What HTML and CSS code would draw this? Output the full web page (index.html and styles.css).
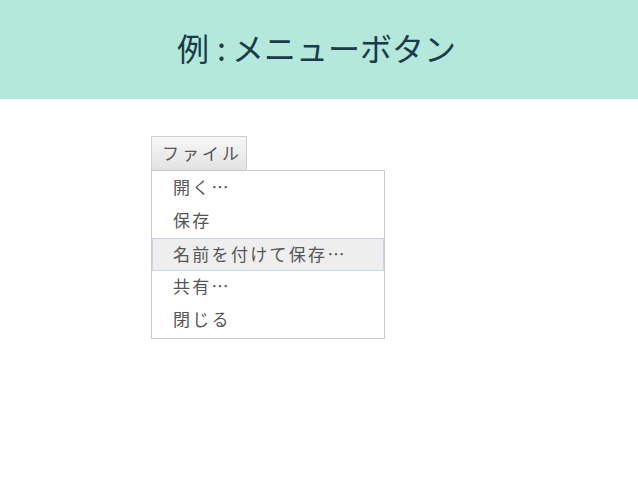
FILE: index.html
```html
<!DOCTYPE html>
<html lang="ja">
<head>
<meta charset="utf-8">
<link rel="stylesheet" href="styles.css">
</head>
<body>
<header class="header"><h1 class="title">例<span class="colon">:</span>メニューボタン</h1></header>
<main class="content">
  <div class="menubutton">
    <button class="btn">ファイル</button>
    <ul class="menu">
      <li class="item">開く…</li>
      <li class="item">保存</li>
      <li class="item active">名前を付けて保存…</li>
      <li class="item">共有…</li>
      <li class="item">閉じる</li>
    </ul>
  </div>
</main>
</body>
</html>
```
FILE: styles.css
```css
html, body { margin: 0; padding: 0; background: #fff; }
body { font-family: "Noto Sans CJK JP", "Noto Sans", sans-serif; }
.header {
  height: 99px;
  background: #b3e8da;
  display: flex;
  align-items: center;
  padding-left: 177px;
}
.title {
  margin: 0 0 5px 0;
  font-weight: 400;
  font-size: 32px;
  color: #1d3a4c;
}
.colon { padding: 0 6px 0 8px; }
.content { padding: 37px 0 0 151px; }
.menubutton { display: flex; flex-direction: column; align-items: flex-start; }
.btn {
  height: 34px;
  width: 96px;
  margin: 0;
  padding: 0 0 3px 10px;
  text-align: left;
  border: 1px solid #cfcfcf;
  border-bottom: none;
  background: linear-gradient(#f7f7f7, #e2e2e2);
  font-family: inherit;
  font-size: 17px;
  letter-spacing: 3px;
  color: #555;
}
.menu {
  list-style: none;
  margin: 0;
  padding: 1px 0;
  width: 232px;
  border: 1px solid #cccccc;
}
.item {
  height: 33px;
  box-sizing: border-box;
  display: flex;
  align-items: center;
  padding: 0 0 4px 21px;
  font-size: 17px;
  letter-spacing: 2.3px;
  color: #555;
}
.item.active {
  background: #eeeeee;
  border: 1px solid #c8d6ea;
  padding: 0 0 2px 20px;
}
```
